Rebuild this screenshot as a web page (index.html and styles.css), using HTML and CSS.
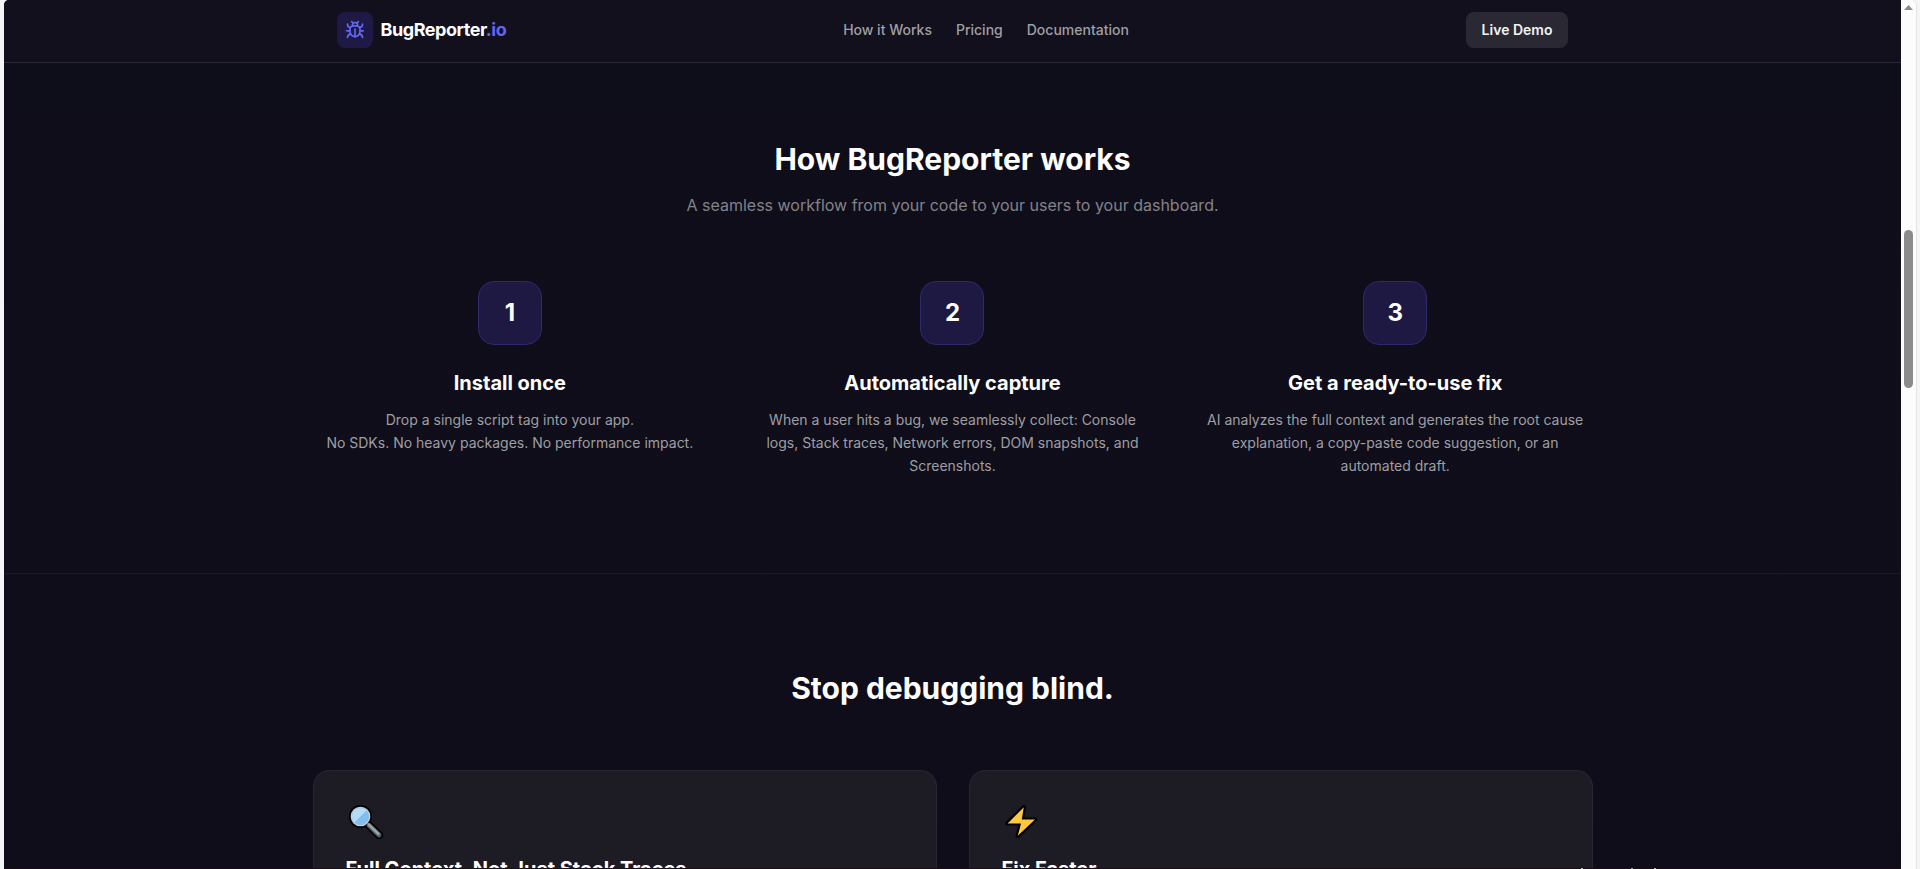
FILE: index.html
```html
<!DOCTYPE html>
<html lang="en">
<head>
    <meta charset="UTF-8">
    <meta name="viewport" content="width=device-width, initial-scale=1.0">
    <title>BugReporter.io</title>
    <link rel="stylesheet" href="styles.css">
</head>
<body>

    <div class="page">
        <header class="navbar">
            <div class="nav-inner">
                <div class="brand">
                    <span class="brand-icon">
                        <svg width="20" height="20" viewBox="0 0 24 24" fill="none" stroke="currentColor" stroke-width="2" stroke-linecap="round" stroke-linejoin="round">
                            <path d="M12 20v-9"/>
                            <path d="M14 7a4 4 0 0 1 4 4v3a6 6 0 0 1-12 0v-3a4 4 0 0 1 4-4z"/>
                            <path d="M14.12 3.88 16 2"/>
                            <path d="M21 21a4 4 0 0 0-3.81-4"/>
                            <path d="M21 5a4 4 0 0 1-3.55 3.97"/>
                            <path d="M22 13h-4"/>
                            <path d="M3 21a4 4 0 0 1 3.81-4"/>
                            <path d="M3 5a4 4 0 0 0 3.55 3.97"/>
                            <path d="M6 13H2"/>
                            <path d="m8 2 1.88 1.88"/>
                            <path d="M9 7.13V6a3 3 0 1 1 6 0v1.13"/>
                        </svg>
                    </span>
                    <span class="brand-name">BugReporter<span class="accent">.io</span></span>
                </div>
                <nav class="nav-links">
                    <a>How it Works</a>
                    <a>Pricing</a>
                    <a>Documentation</a>
                </nav>
                <a class="demo-btn">Live Demo</a>
            </div>
        </header>

        <!-- How it works -->
        <section class="section how">
            <div class="container">
                <h2>How BugReporter works</h2>
                <p class="subtitle">A seamless workflow from your code to your users to your dashboard.</p>
                <div class="steps">
                    <div class="step">
                        <div class="step-number">1</div>
                        <h3>Install once</h3>
                        <p>Drop a single script tag into your app.<br>No SDKs. No heavy packages. No performance impact.</p>
                    </div>
                    <div class="step">
                        <div class="step-number">2</div>
                        <h3>Automatically capture</h3>
                        <p>When a user hits a bug, we seamlessly collect: Console logs, Stack traces, Network errors, DOM snapshots, and Screenshots.</p>
                    </div>
                    <div class="step">
                        <div class="step-number">3</div>
                        <h3>Get a ready-to-use fix</h3>
                        <p>AI analyzes the full context and generates the root cause explanation, a copy-paste code suggestion, or an automated draft.</p>
                    </div>
                </div>
            </div>
        </section>

        <!-- Benefits -->
        <section class="section benefits">
            <div class="container">
                <h2>Stop debugging blind.</h2>
                <div class="cards">
                    <div class="card">
                        <svg class="card-icon" width="40" height="36" viewBox="0 -1 40 36">
                            <path d="M21 19.5 33.2 31" stroke="#000" stroke-width="8" stroke-linecap="round"/>
                            <circle cx="14.5" cy="12.5" r="11.6" fill="#000"/>
                            <path d="M23 21.3 33 31" stroke="#53636a" stroke-width="4.8" stroke-linecap="round"/>
                            <path d="M22.8 20.6 32.4 29.8" stroke="#9aa7ad" stroke-width="2.4" stroke-linecap="round"/>
                            <circle cx="14.5" cy="12.5" r="9.2" fill="#82bdf0" stroke="#c5cdd2" stroke-width="1.3"/>
                            <path d="M8.4 18.6A8.5 8.5 0 0 1 20.6 6.4z" fill="#b3dcf6"/>
                        </svg>
                        <h3>Full Context, Not Just Stack Traces</h3>
                    </div>
                    <div class="card">
                        <svg class="card-icon" width="40" height="36" viewBox="-1 -1 40 36">
                            <path d="M20.8 3.2 4.6 19.4H18L14.8 31.8 32 15.6H18.8z" fill="#000" stroke="#000" stroke-width="4.4" stroke-linejoin="round"/>
                            <path d="M20.8 3.2 4.6 19.4H18L14.8 31.8 32 15.6H18.8z" fill="#ffc83d"/>
                        </svg>
                        <h3>Fix Faster</h3>
                    </div>
                </div>
            </div>
        </section>
    </div>

    <div class="scrollbar">
        <div class="scroll-arrow"></div>
        <div class="scroll-thumb"></div>
    </div>

    <div class="bottom-edge"></div>

</body>
</html>
```
FILE: styles.css
```css
* {
    box-sizing: border-box;
}

body {
    display: flex;
    height: 869px;
    margin: 0;
    padding: 0 4px;
    overflow: hidden;
    background-color: #f5f5f5;
    font-family: Inter, "Liberation Sans", sans-serif;
    color: #fff;
}

h2, h3, p {
    margin: 0;
}

.page {
    flex: 1;
    height: 869px;
    overflow: hidden;
    border-top-left-radius: 5px;
    background: linear-gradient(#0e0e1a, #0f0d19);
}

/* Navbar */
.navbar {
    height: 63px;
    border-bottom: 1px solid #292834;
    background-color: #11101c;
}

.nav-inner {
    display: flex;
    align-items: center;
    justify-content: space-between;
    width: 1280px;
    height: 60px;
    margin: 0 auto;
    padding: 0 24px;
}

.brand {
    display: flex;
    align-items: center;
    gap: 8px;
}

.brand-icon {
    display: flex;
    align-items: center;
    justify-content: center;
    width: 36px;
    height: 36px;
    border-radius: 8px;
    background-color: #1e1a45;
    color: #6366f1;
}

.brand-name {
    padding-bottom: 2px;
    font-size: 18px;
    font-weight: 700;
    letter-spacing: -0.45px;
}

.accent {
    color: #6366f1;
}

.nav-links {
    display: flex;
    gap: 24px;
    padding-bottom: 1px;
    font-size: 14px;
    font-weight: 500;
    line-height: 19px;
    color: #a09fa4;
}

.demo-btn {
    padding: 8px 16px;
    border-radius: 8px;
    background-color: #292833;
    font-size: 14px;
    font-weight: 600;
    line-height: 20px;
    color: #f3f3f4;
}

/* Sections */
.container {
    width: 1280px;
    margin: 0 auto;
}

.section h2 {
    font-size: 30px;
    font-weight: 700;
    line-height: 36px;
    text-align: center;
}

.how {
    height: 511px;
    padding-top: 78px;
    border-bottom: 1px solid #1a1924;
}

.subtitle {
    margin-top: 16px;
    font-size: 16px;
    line-height: 24px;
    text-align: center;
    color: #838288;
}

.steps {
    display: grid;
    grid-template-columns: repeat(3, 1fr);
    gap: 48px;
    margin-top: 64px;
    text-align: center;
}

.step-number {
    display: flex;
    align-items: center;
    justify-content: center;
    width: 64px;
    height: 64px;
    margin: 0 auto 24px;
    padding-bottom: 2px;
    border: 1px solid #2e2a6c;
    border-radius: 16px;
    background-color: #1d1943;
    font-size: 24px;
    font-weight: 700;
}

.step h3, .card h3 {
    font-size: 20px;
    font-weight: 700;
    line-height: 28px;
}

.step p {
    margin-top: 12px;
    font-size: 14px;
    line-height: 22.75px;
    color: #9f9ea3;
}

.benefits {
    padding-top: 96px;
}

.cards {
    display: grid;
    grid-template-columns: 1fr 1fr;
    gap: 32px;
    margin-top: 64px;
}

.card {
    height: 220px;
    padding: 32px;
    border: 1px solid #282630;
    border-radius: 16px;
    background-color: #1d1b24;
}

.card-icon {
    display: block;
    margin-bottom: 16px;
}

/* Scrollbar */
.scrollbar {
    width: 15px;
    height: 869px;
    padding: 5px 3px 0;
    border-top-right-radius: 5px;
    background-color: #fcfcfc;
    box-shadow: 1px 0 0 #e4e4e4;
}

.scroll-arrow {
    width: 9px;
    height: 5px;
    background-color: #8b8b8b;
    clip-path: polygon(50% 0, 100% 100%, 0 100%);
}

.scroll-thumb {
    width: 9px;
    height: 158px;
    margin-top: 220px;
    border-radius: 5px;
    background-color: #8b8b8b;
}

/* Thin dark line over the bottom of the page, with three light ticks */
.bottom-edge {
    position: absolute;
    left: 4px;
    bottom: 0;
    width: 1897px;
    height: 1px;
    background:
        linear-gradient(#aaa, #aaa) 1577px 0 / 2px 1px no-repeat,
        linear-gradient(#aaa, #aaa) 1627px 0 / 2px 1px no-repeat,
        linear-gradient(#aaa, #aaa) 1650px 0 / 2px 1px no-repeat,
        #170d17;
}
```
